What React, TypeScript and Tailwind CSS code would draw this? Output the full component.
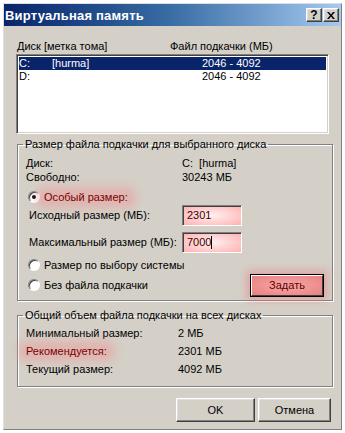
import React from "react";

const font = "font-['Liberation_Sans',Arial,sans-serif]";

function Raised({ children, className = "" }: { children: React.ReactNode; className?: string }) {
  return (
    <div
      className={
        "flex items-center justify-center border border-t-white border-l-white border-b-[#404040] border-r-[#404040] shadow-[inset_-1px_-1px_0_#808080,inset_1px_1px_0_#dfdfdf] bg-[#d4d0c8] " +
        className
      }
    >
      {children}
    </div>
  );
}

function Radio({ checked }: { checked?: boolean }) {
  return (
    <span className="w-3 h-3 rounded-full bg-white border border-t-[#808080] border-l-[#808080] border-b-white border-r-white shadow-[inset_1px_1px_0_#404040] flex items-center justify-center shrink-0">
      {checked && <span className="w-1 h-1 rounded-full bg-black" />}
    </span>
  );
}

function Glow({ children }: { children: React.ReactNode }) {
  return (
    <span className="px-1 -mx-1 rounded-full bg-[rgba(240,150,150,0.45)] shadow-[0_0_8px_5px_rgba(240,150,150,0.45)] text-[#7a0000]">
      {children}
    </span>
  );
}

function Field({ value, caret }: { value: string; caret?: boolean }) {
  return (
    <div className="w-[60px] h-[21px] border border-t-[#808080] border-l-[#808080] border-b-white border-r-white shadow-[inset_1px_1px_0_#404040] bg-[radial-gradient(ellipse_at_center,#fff0f0_0%,#ffc4c4_70%,#ffb0b0_100%)] flex items-center pl-1 text-[#400000]">
      {value}
      {caret && <span className="w-px h-[13px] bg-black" />}
    </div>
  );
}

export default function App() {
  return (
    <div className={"w-[345px] h-[433px] bg-white pt-[3px] pl-[3px] text-[11px] leading-[13px] text-black " + font}>
      <div className="w-[339px] h-[427px] bg-[#d4d0c8] border border-t-[#dfdfdf] border-l-[#dfdfdf] border-b-[#808080] border-r-[#808080] flex flex-col">
        {/* title bar */}
        <div className="h-[22px] bg-gradient-to-r from-[#0a246a] via-[#3a6ea5] to-[#a6caf0] flex items-center pl-[1px] pr-[2px]">
          <span className="text-white font-bold text-[13px] tracking-[0.2px]">Виртуальная память</span>
          <div className="ml-auto flex gap-[1px]">
            <Raised className="w-4 h-[14px] text-[12px] font-bold leading-none">?</Raised>
            <Raised className="w-4 h-[14px]">
              <svg width="8" height="7" viewBox="0 0 8 7">
                <path d="M0 0h2l2 2.5L6 0h2L5 3.5 8 7H6L4 4.5 2 7H0l3-3.5z" fill="black" />
              </svg>
            </Raised>
          </div>
        </div>

        <div className="flex flex-col px-[12px]">
          <div className="flex mt-[14px] h-[13px]">
            <span className="w-[154px] pl-[1px]">Диск [метка тома]</span>
            <span>Файл подкачки (МБ)</span>
          </div>

          <div className="mt-[1px] h-[80px] bg-white border border-t-[#808080] border-l-[#808080] border-b-white border-r-white shadow-[inset_1px_1px_0_#404040,inset_-1px_-1px_0_#d4d0c8] p-[2px] flex flex-col">
            <div className="h-[13px] bg-[#0a246a] text-white flex">
              <span className="w-[33px]">C:</span>
              <span className="w-[150px]">[hurma]</span>
              <span>2046 - 4092</span>
            </div>
            <div className="h-[13px] flex">
              <span className="w-[183px]">D:</span>
              <span>2046 - 4092</span>
            </div>
          </div>

          <fieldset className="mt-[4px] ml-[1px] w-[316px] border border-[#808080] shadow-[inset_1px_1px_0_white,1px_1px_0_white] px-[8px] pb-[4px]">
            <legend className="ml-[-3px] px-[2px] h-[13px]">Размер файла подкачки для выбранного диска</legend>
            <div className="flex h-[14px] mt-[5px] items-center">
              <span className="w-[156px]">Диск:</span>
              <span>C:&nbsp;&nbsp;[hurma]</span>
            </div>
            <div className="flex h-[14px] items-center">
              <span className="w-[156px]">Свободно:</span>
              <span>30243 МБ</span>
            </div>
            <div className="flex h-[16px] mt-[5px] items-center gap-[4px] pl-[2px]">
              <Radio checked />
              <Glow>Особый размер:</Glow>
            </div>
            <div className="flex h-[21px] items-center">
              <span className="w-[156px] pl-[3px]">Исходный размер (МБ):</span>
              <Field value="2301" />
            </div>
            <div className="flex h-[21px] mt-[6px] items-center">
              <span className="w-[156px] pl-[3px]">Максимальный размер (МБ):</span>
              <Field value="7000" caret />
            </div>
            <div className="flex h-[16px] mt-[4px] items-center gap-[4px] pl-[2px]">
              <Radio />
              <span>Размер по выбору системы</span>
            </div>
            <div className="flex h-[22px] mt-[1px] items-center gap-[4px] pl-[2px]">
              <Radio />
              <span>Без файла подкачки</span>
              <div className="ml-auto w-[74px] h-[23px] border border-black shadow-[0_0_8px_3px_rgba(240,120,120,0.5)]">
                <div className="w-full h-full flex items-center justify-center border border-t-white border-l-white border-b-[#404040] border-r-[#404040] bg-[radial-gradient(ellipse_at_center,#f8a8a8_0%,#e88080_100%)] text-[#600000]">
                  Задать
                </div>
              </div>
            </div>
          </fieldset>

          <fieldset className="mt-[8px] ml-[1px] w-[316px] border border-[#808080] shadow-[inset_1px_1px_0_white,1px_1px_0_white] px-[8px] pb-[8px]">
            <legend className="ml-[-3px] px-[2px] h-[13px]">Общий объем файла подкачки на всех дисках</legend>
            <div className="flex h-[18px] mt-[2px] items-center">
              <span className="w-[152px]">Минимальный размер:</span>
              <span>2 МБ</span>
            </div>
            <div className="flex h-[18px] items-center">
              <span className="w-[152px]">
                <Glow>Рекомендуется:</Glow>
              </span>
              <span>2301 МБ</span>
            </div>
            <div className="flex h-[18px] items-center">
              <span className="w-[152px]">Текущий размер:</span>
              <span>4092 МБ</span>
            </div>
          </fieldset>

          <div className="flex justify-end gap-[3px] mt-[11px]">
            <Raised className="w-[79px] h-[24px]">OK</Raised>
            <Raised className="w-[73px] h-[24px] mr-[-2px]">Отмена</Raised>
          </div>
        </div>
      </div>
    </div>
  );
}
